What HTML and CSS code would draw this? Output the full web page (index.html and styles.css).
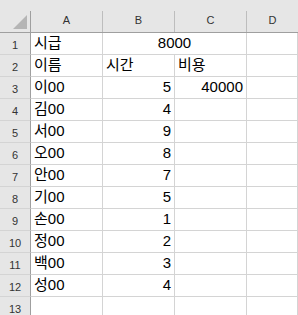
FILE: index.html
```html
<!DOCTYPE html>
<html lang="ko">
<head>
    <meta charset="UTF-8">
    <title>시급 계산</title>
    <link rel="stylesheet" href="styles.css">
</head>
<body>
    <div class="sheet">
        <div class="col-heads">
            <div class="corner"><span class="select-all"></span></div>
            <div class="col-head">A</div>
            <div class="col-head">B</div>
            <div class="col-head">C</div>
            <div class="col-head last">D</div>
        </div>

        <div class="grid">
            <div class="row-head">1</div>
            <div class="cell">시급</div>
            <div class="cell merged">8000</div>
            <div class="cell"></div>

            <div class="row-head">2</div>
            <div class="cell">이름</div>
            <div class="cell">시간</div>
            <div class="cell">비용</div>
            <div class="cell"></div>

            <div class="row-head">3</div>
            <div class="cell">이00</div>
            <div class="cell num">5</div>
            <div class="cell num">40000</div>
            <div class="cell"></div>

            <div class="row-head">4</div>
            <div class="cell">김00</div>
            <div class="cell num">4</div>
            <div class="cell"></div>
            <div class="cell"></div>

            <div class="row-head">5</div>
            <div class="cell">서00</div>
            <div class="cell num">9</div>
            <div class="cell"></div>
            <div class="cell"></div>

            <div class="row-head">6</div>
            <div class="cell">오00</div>
            <div class="cell num">8</div>
            <div class="cell"></div>
            <div class="cell"></div>

            <div class="row-head">7</div>
            <div class="cell">안00</div>
            <div class="cell num">7</div>
            <div class="cell"></div>
            <div class="cell"></div>

            <div class="row-head">8</div>
            <div class="cell">기00</div>
            <div class="cell num">5</div>
            <div class="cell"></div>
            <div class="cell"></div>

            <div class="row-head">9</div>
            <div class="cell">손00</div>
            <div class="cell num">1</div>
            <div class="cell"></div>
            <div class="cell"></div>

            <div class="row-head">10</div>
            <div class="cell">정00</div>
            <div class="cell num">2</div>
            <div class="cell"></div>
            <div class="cell"></div>

            <div class="row-head">11</div>
            <div class="cell">백00</div>
            <div class="cell num">3</div>
            <div class="cell"></div>
            <div class="cell"></div>

            <div class="row-head">12</div>
            <div class="cell">성00</div>
            <div class="cell num">4</div>
            <div class="cell"></div>
            <div class="cell"></div>

            <div class="row-head">13</div>
            <div class="cell"></div>
            <div class="cell"></div>
            <div class="cell"></div>
            <div class="cell"></div>
        </div>
    </div>
</body>
</html>
```

FILE: styles.css
```css
body {
    margin: 0;
    background: white;
    overflow: hidden;
}
.sheet {
    width: 298px;
    height: 315px;
    overflow: hidden;
    font-family: "Liberation Sans", "Noto Sans CJK KR", sans-serif;
}
.col-heads, .grid {
    display: grid;
    grid-template-columns: 31px 72px 72px 72px 1fr;
}
.col-heads {
    background: #e6e6e6;
    padding-top: 11px;
    border-bottom: 1px solid #9f9f9f;
}
.col-heads > div {
    height: 21px;
    box-sizing: border-box;
    border-right: 1px solid #bdbdbd;
}
.col-heads > .last {
    border-right: none;
}
.corner {
    display: flex;
    justify-content: flex-end;
    align-items: flex-end;
    padding: 0 3px 3px 0;
}
.col-heads > .corner {
    border-right-color: #9f9f9f;
}
.select-all {
    width: 14px;
    height: 14px;
    background: #b5b5b5;
    clip-path: polygon(100% 0, 100% 100%, 0 100%);
}
.col-head {
    text-align: center;
    font-size: 11px;
    line-height: 18px;
    color: #333;
}
.grid {
    grid-auto-rows: 22px;
}
.row-head, .cell {
    box-sizing: border-box;
    border-right: 1px solid #d4d4d4;
    border-bottom: 1px solid #d4d4d4;
    white-space: nowrap;
    overflow: hidden;
}
.row-head {
    background: #e6e6e6;
    border-right-color: #9f9f9f;
    text-align: center;
    font-size: 11px;
    line-height: 24px;
    color: #333;
}
.cell {
    font-size: 15px;
    line-height: 20px;
    padding: 0 3px;
    color: #000;
}
.num {
    text-align: right;
}
.merged {
    grid-column: span 2;
    text-align: center;
}
```
